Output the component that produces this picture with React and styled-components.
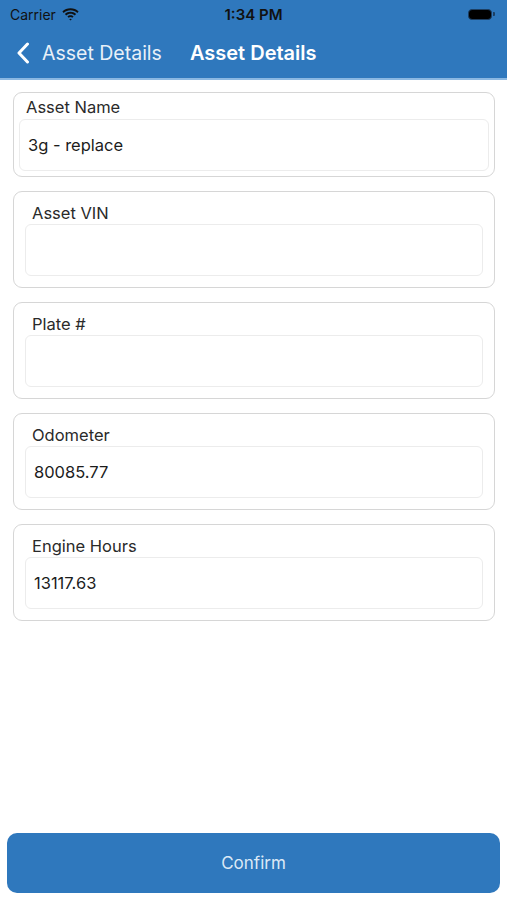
import React from "react";
import styled, { createGlobalStyle } from "styled-components";

const GlobalStyle = createGlobalStyle`
  html, body {
    margin: 0;
    padding: 0;
    background: #ffffff;
  }
  body {
    font-family: Inter, "Liberation Sans", Arial, sans-serif;
    -webkit-font-smoothing: antialiased;
  }
  * {
    box-sizing: border-box;
  }
`;

const Screen = styled.div`
  width: 507px;
  height: 900px;
  display: flex;
  flex-direction: column;
  background: #ffffff;
  overflow: hidden;
`;

const Header = styled.div`
  background: #2f78bd;
  border-bottom: 2px solid #8bb8e2;
`;

const StatusBar = styled.div`
  height: 28px;
  display: grid;
  grid-template-columns: 1fr auto 1fr;
  align-items: center;
  padding: 0 10px;
  color: #111;
  font-size: 14px;
`;

const Carrier = styled.div`
  display: flex;
  align-items: center;
  gap: 6px;
`;

const Clock = styled.div`
  font-weight: 600;
  font-size: 15px;
`;

const Battery = styled.div`
  justify-self: end;
  display: flex;
  align-items: center;
  gap: 1px;
  margin-right: 2px;
`;

const BatteryBody = styled.div`
  width: 24px;
  height: 11px;
  border-radius: 4px;
  background: #000;
  border: 1px solid #1d3f63;
`;

const BatteryCap = styled.div`
  width: 2px;
  height: 4px;
  border-radius: 0 1px 1px 0;
  background: #1d3f63;
`;

const NavBar = styled.div`
  height: 50px;
  display: flex;
  align-items: center;
  padding: 0 16px;
  color: #fff;
`;

const Back = styled.div`
  display: flex;
  align-items: center;
  gap: 12px;
  font-size: 19.5px;
  color: #e8f0f8;
`;

const Title = styled.div`
  margin-left: 28px;
  font-size: 20px;
  font-weight: 600;
`;

const Form = styled.div`
  flex: 1;
  display: flex;
  flex-direction: column;
  gap: 14px;
  padding: 12px 12px 0 13px;
`;

const Card = styled.div`
  height: ${(p) => (p.$tight ? "85px" : "97px")};
  border: 1.5px solid #d6d6d6;
  border-radius: 9px;
  padding: ${(p) => (p.$tight ? "3.5px 5px 0 5px" : "10.5px 11px 0 11px")};
  display: flex;
  flex-direction: column;
`;

const Label = styled.div`
  font-size: 16.5px;
  color: #2a2a2a;
  line-height: 20px;
  padding-left: 7px;
  margin-bottom: ${(p) => (p.$tight ? "2px" : "1px")};
`;

const Field = styled.div`
  height: 52px;
  border: 1px solid #ececec;
  border-radius: 6px;
  display: flex;
  align-items: center;
  padding-left: 8px;
  font-size: 16.5px;
  color: #1c1c1c;
`;

const Footer = styled.div`
  padding: 0 7px 7px 7px;
`;

const ConfirmButton = styled.button`
  width: 100%;
  height: 60px;
  border: none;
  border-radius: 10px;
  background: #2f78bd;
  color: #dce9f6;
  font-family: inherit;
  font-size: 17px;
`;

const fields = [
  { label: "Asset Name", value: "3g - replace", tight: true },
  { label: "Asset VIN", value: "" },
  { label: "Plate #", value: "" },
  { label: "Odometer", value: "80085.77" },
  { label: "Engine Hours", value: "13117.63" },
];

const Wifi = () => (
  <svg width="17" height="13" viewBox="0 0 17 13">
    <path d="M8.5 2.2c2.6 0 5 1 6.8 2.7l1.3-1.4C14.5 1.5 11.6.3 8.5.3S2.5 1.5.4 3.5l1.3 1.4C3.5 3.2 5.9 2.2 8.5 2.2z" fill="#111" />
    <path d="M8.5 5.7c1.6 0 3.1.6 4.3 1.7l1.3-1.4C12.6 4.6 10.6 3.8 8.5 3.8S4.4 4.6 2.9 6l1.3 1.4c1.2-1.1 2.7-1.7 4.3-1.7z" fill="#111" />
    <path d="M8.5 9.1c.7 0 1.3.3 1.8.7l1.3-1.4C10.8 7.7 9.7 7.2 8.5 7.2s-2.3.5-3.1 1.2l1.3 1.4c.5-.4 1.1-.7 1.8-.7z" fill="#111" />
    <path d="M8.5 12.6l1.3-1.4c-.4-.3-.8-.5-1.3-.5s-.9.2-1.3.5z" fill="#111" />
  </svg>
);

const Chevron = () => (
  <svg width="14" height="22" viewBox="0 0 14 22">
    <path d="M11.5 2L3 11l8.5 9" stroke="#fff" strokeWidth="3" fill="none" strokeLinecap="round" strokeLinejoin="round" />
  </svg>
);

export default function App() {
  return (
    <Screen>
      <GlobalStyle />
      <Header>
        <StatusBar>
          <Carrier>
            Carrier <Wifi />
          </Carrier>
          <Clock>1:34 PM</Clock>
          <Battery>
            <BatteryBody />
            <BatteryCap />
          </Battery>
        </StatusBar>
        <NavBar>
          <Back>
            <Chevron />
            Asset Details
          </Back>
          <Title>Asset Details</Title>
        </NavBar>
      </Header>
      <Form>
        {fields.map((f) => (
          <Card key={f.label} $tight={f.tight}>
            <Label $tight={f.tight}>{f.label}</Label>
            <Field>{f.value}</Field>
          </Card>
        ))}
      </Form>
      <Footer>
        <ConfirmButton>Confirm</ConfirmButton>
      </Footer>
    </Screen>
  );
}
